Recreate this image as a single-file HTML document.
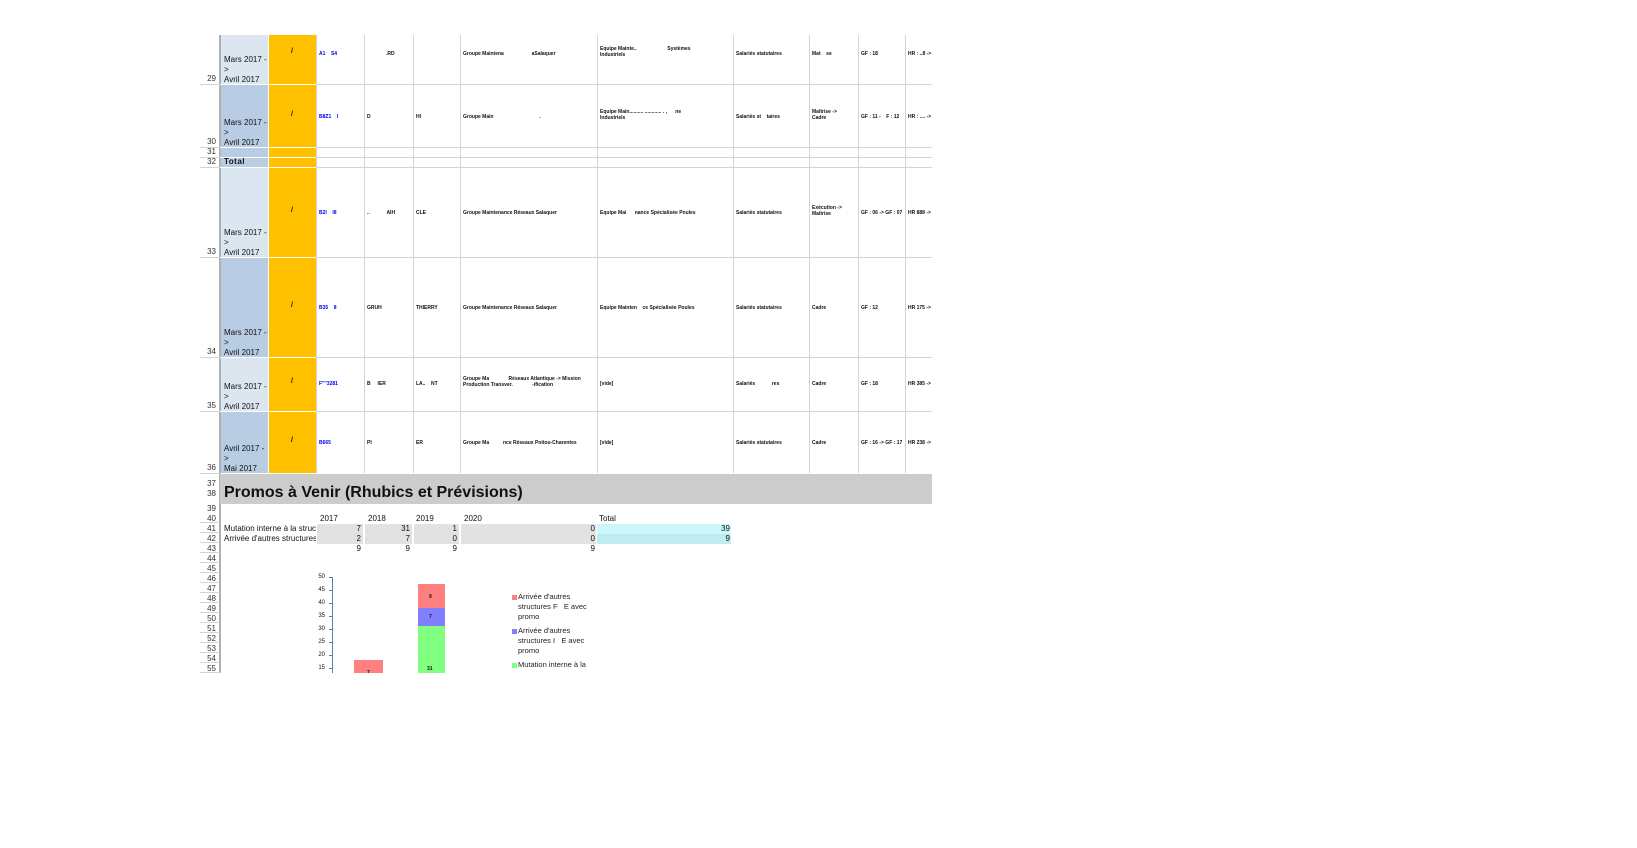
<!DOCTYPE html>
<html><head><meta charset="utf-8"><style>
*{margin:0;padding:0;box-sizing:border-box}
body{width:1637px;height:848px;background:#fff;position:relative;overflow:hidden;font-family:"Liberation Sans",Arial,sans-serif}
.a{position:absolute}
.h{position:absolute;height:1px;background:#d4d4d4}
.v{position:absolute;width:1px;background:#d4d4d4}
.rn{position:absolute;left:196px;width:20px;text-align:right;font-size:8px;color:#333;line-height:10px}
.t{position:absolute;font-size:5px;font-weight:bold;color:#111;white-space:nowrap;line-height:6px}
.b{color:#0000ee}
.dt{position:absolute;left:224px;font-size:8px;line-height:10px;color:#111;white-space:nowrap}
.n{position:absolute;font-size:8px;line-height:10px;color:#111;text-align:right}
.g{position:absolute;background:#e6e6e6;background-image:radial-gradient(#d6d6d6 0.5px,transparent 0.8px);background-size:2px 2px}
.lg{position:absolute;font-size:7px;line-height:10px;color:#222;white-space:nowrap}
</style></head><body>

<div class="a" style="left:220px;top:35px;width:48px;height:49px;background:#dce6f1"></div>
<div class="a" style="left:220px;top:84px;width:48px;height:83px;background:#b8cce4"></div>
<div class="a" style="left:220px;top:167px;width:48px;height:90px;background:#dce6f1"></div>
<div class="a" style="left:220px;top:257px;width:48px;height:100px;background:#b8cce4"></div>
<div class="a" style="left:220px;top:357px;width:48px;height:54px;background:#dce6f1"></div>
<div class="a" style="left:220px;top:411px;width:48px;height:62px;background:#b8cce4"></div>
<div class="a" style="left:268px;top:35px;width:48px;height:438px;background:#ffc000"></div>

<div class="a" style="left:219px;top:35px;width:2px;height:638px;background:#b0b0b0"></div>
<div class="a" style="left:268px;top:35px;width:1px;height:438px;background:#fff"></div>
<div class="v" style="left:316px;top:35px;height:438px"></div>
<div class="v" style="left:364px;top:35px;height:438px"></div>
<div class="v" style="left:413px;top:35px;height:438px"></div>
<div class="v" style="left:460px;top:35px;height:438px"></div>
<div class="v" style="left:597px;top:35px;height:438px"></div>
<div class="v" style="left:733px;top:35px;height:438px"></div>
<div class="v" style="left:809px;top:35px;height:438px"></div>
<div class="v" style="left:858px;top:35px;height:438px"></div>
<div class="v" style="left:905px;top:35px;height:438px"></div>

<div class="h" style="left:200px;top:84px;width:732px"></div>
<div class="h" style="left:200px;top:147px;width:732px"></div>
<div class="h" style="left:200px;top:157px;width:732px"></div>
<div class="h" style="left:200px;top:167px;width:732px"></div>
<div class="h" style="left:200px;top:257px;width:732px"></div>
<div class="h" style="left:200px;top:357px;width:732px"></div>
<div class="h" style="left:200px;top:411px;width:732px"></div>
<div class="h" style="left:200px;top:473px;width:20px"></div>
<div class="a" style="left:220px;top:84px;width:96px;height:1px;background:#fff"></div>
<div class="a" style="left:220px;top:147px;width:96px;height:1px;background:#fff"></div>
<div class="a" style="left:220px;top:157px;width:96px;height:1px;background:#fff"></div>
<div class="a" style="left:220px;top:167px;width:96px;height:1px;background:#fff"></div>
<div class="a" style="left:220px;top:257px;width:96px;height:1px;background:#fff"></div>
<div class="a" style="left:220px;top:357px;width:96px;height:1px;background:#fff"></div>
<div class="a" style="left:220px;top:411px;width:96px;height:1px;background:#fff"></div>

<div class="rn" style="top:74px">29</div>
<div class="rn" style="top:137px">30</div>
<div class="rn" style="top:147px">31</div>
<div class="rn" style="top:157px">32</div>
<div class="rn" style="top:247px">33</div>
<div class="rn" style="top:347px">34</div>
<div class="rn" style="top:401px">35</div>
<div class="rn" style="top:463px">36</div>

<div class="dt" style="top:55px">Mars 2017 -<br>&gt;<br>Avril 2017</div>
<div class="dt" style="top:118px">Mars 2017 -<br>&gt;<br>Avril 2017</div>
<div class="dt" style="top:157px;font-weight:bold;letter-spacing:0.5px">Total</div>
<div class="dt" style="top:228px">Mars 2017 -<br>&gt;<br>Avril 2017</div>
<div class="dt" style="top:328px">Mars 2017 -<br>&gt;<br>Avril 2017</div>
<div class="dt" style="top:382px">Mars 2017 -<br>&gt;<br>Avril 2017</div>
<div class="dt" style="top:444px">Avril 2017 -<br>&gt;<br>Mai 2017</div>

<div class="t" style="left:291px;top:49px;font-size:7px">/</div>
<div class="t" style="left:291px;top:112px;font-size:7px">/</div>
<div class="t" style="left:291px;top:208px;font-size:7px">/</div>
<div class="t" style="left:291px;top:303px;font-size:7px">/</div>
<div class="t" style="left:291px;top:379px;font-size:7px">/</div>
<div class="t" style="left:291px;top:438px;font-size:7px">/</div>

<div class="t b" style="left:319px;top:51px">A1 &nbsp; &nbsp;S4</div>
<div class="t" style="left:386px;top:51px">.RD</div>
<div class="t" style="left:463px;top:51px">Groupe Maintena &nbsp; &nbsp; &nbsp; &nbsp; &nbsp; &nbsp; &nbsp; &nbsp; &nbsp; &nbsp;aSalaquer</div>
<div class="t" style="left:600px;top:46px">Equipe Mainte.. &nbsp; &nbsp; &nbsp; &nbsp; &nbsp; &nbsp; &nbsp; &nbsp; &nbsp; &nbsp; &nbsp;Systèmes<br>Industriels</div>
<div class="t" style="left:736px;top:51px">Salariés statutaires</div>
<div class="t" style="left:812px;top:51px">Mat &nbsp; &nbsp;se</div>
<div class="t" style="left:861px;top:51px">GF : 18</div>
<div class="t" style="left:908px;top:51px">HR : ..8 -&gt;</div>

<div class="t b" style="left:319px;top:114px">B8Z1 &nbsp; &nbsp;I</div>
<div class="t" style="left:367px;top:114px">D</div>
<div class="t" style="left:416px;top:114px">HI</div>
<div class="t" style="left:463px;top:114px">Groupe Main &nbsp; &nbsp; &nbsp; &nbsp; &nbsp; &nbsp; &nbsp; &nbsp; &nbsp; &nbsp; &nbsp; &nbsp; &nbsp; &nbsp; &nbsp; &nbsp; .</div>
<div class="t" style="left:600px;top:109px">Equipe Main.......... ............ . , &nbsp; &nbsp; &nbsp;ne<br>Industriels</div>
<div class="t" style="left:736px;top:114px">Salariés st &nbsp; &nbsp;taires</div>
<div class="t" style="left:812px;top:109px">Maîtrise -&gt;<br>Cadre</div>
<div class="t" style="left:861px;top:114px">GF : 11 - &nbsp; &nbsp;F : 12</div>
<div class="t" style="left:908px;top:114px">HR : .... -&gt;</div>

<div class="t b" style="left:319px;top:210px">B2I &nbsp; &nbsp;I8</div>
<div class="t" style="left:367px;top:210px">.. &nbsp; &nbsp; &nbsp; &nbsp; &nbsp; &nbsp;AIH</div>
<div class="t" style="left:416px;top:210px">CLE</div>
<div class="t" style="left:463px;top:210px">Groupe Maintenance Réseaux Salaquer</div>
<div class="t" style="left:600px;top:210px">Equipe Mai &nbsp; &nbsp; &nbsp;nance Spécialisée Poules</div>
<div class="t" style="left:736px;top:210px">Salariés statutaires</div>
<div class="t" style="left:812px;top:205px">Exécution -&gt;<br>Maîtrise</div>
<div class="t" style="left:861px;top:210px">GF : 06 -&gt; GF : 07</div>
<div class="t" style="left:908px;top:210px">HR 888 -&gt;</div>

<div class="t b" style="left:319px;top:305px">B35 &nbsp; &nbsp;8</div>
<div class="t" style="left:367px;top:305px">GRUH</div>
<div class="t" style="left:416px;top:305px">THIERRY</div>
<div class="t" style="left:463px;top:305px">Groupe Maintenance Réseaux Salaquer</div>
<div class="t" style="left:600px;top:305px">Equipe Mainten &nbsp; &nbsp;ce Spécialisée Poules</div>
<div class="t" style="left:736px;top:305px">Salariés statutaires</div>
<div class="t" style="left:812px;top:305px">Cadre</div>
<div class="t" style="left:861px;top:305px">GF : 12</div>
<div class="t" style="left:908px;top:305px">HR 175 -&gt;</div>

<div class="t b" style="left:319px;top:381px">F""3281</div>
<div class="t" style="left:367px;top:381px">B &nbsp; &nbsp; IER</div>
<div class="t" style="left:416px;top:381px">LA.. &nbsp; &nbsp;NT</div>
<div class="t" style="left:463px;top:376px">Groupe Ma &nbsp; &nbsp; &nbsp; &nbsp; &nbsp; &nbsp; &nbsp;Réseaux Atlantique -&gt; Mission<br>Production Transver. &nbsp; &nbsp; &nbsp; &nbsp; &nbsp; &nbsp; &nbsp;-ification</div>
<div class="t" style="left:600px;top:381px">[vide]</div>
<div class="t" style="left:736px;top:381px">Salariés &nbsp; &nbsp; &nbsp; &nbsp; &nbsp; &nbsp;res</div>
<div class="t" style="left:812px;top:381px">Cadre</div>
<div class="t" style="left:861px;top:381px">GF : 18</div>
<div class="t" style="left:908px;top:381px">HR 385 -&gt;</div>

<div class="t b" style="left:319px;top:440px">B665</div>
<div class="t" style="left:367px;top:440px">PI</div>
<div class="t" style="left:416px;top:440px">ER</div>
<div class="t" style="left:463px;top:440px">Groupe Ma &nbsp; &nbsp; &nbsp; &nbsp; &nbsp;nce Réseaux Poitou-Charentes</div>
<div class="t" style="left:600px;top:440px">[vide]</div>
<div class="t" style="left:736px;top:440px">Salariés statutaires</div>
<div class="t" style="left:812px;top:440px">Cadre</div>
<div class="t" style="left:861px;top:440px">GF : 16 -&gt; GF : 17</div>
<div class="t" style="left:908px;top:440px">HR 238 -&gt;</div>

<!-- clip K column overflow -->
<div class="a" style="left:932px;top:30px;width:100px;height:450px;background:#fff"></div>

<div class="a" style="left:220px;top:474px;width:712px;height:30px;background:#cccccc"></div>
<div class="a" style="left:224px;top:483px;font-size:16px;font-weight:bold;color:#111;white-space:nowrap;line-height:20px">Promos à Venir (Rhubics et Prévisions)</div>

<div class="rn" style="top:479px">37</div>
<div class="rn" style="top:489px">38</div>
<div class="rn" style="top:504px">39</div>
<div class="rn" style="top:514px">40</div>
<div class="rn" style="top:524px">41</div>
<div class="rn" style="top:534px">42</div>
<div class="rn" style="top:544px">43</div>
<div class="rn" style="top:554px">44</div>
<div class="rn" style="top:564px">45</div>
<div class="rn" style="top:574px">46</div>
<div class="rn" style="top:584px">47</div>
<div class="rn" style="top:594px">48</div>
<div class="rn" style="top:604px">49</div>
<div class="rn" style="top:614px">50</div>
<div class="rn" style="top:624px">51</div>
<div class="rn" style="top:634px">52</div>
<div class="rn" style="top:644px">53</div>
<div class="rn" style="top:654px">54</div>
<div class="rn" style="top:664px">55</div>
<div class="a" style="left:200px;top:513px;width:20px;height:165px;background:repeating-linear-gradient(to bottom,transparent 0,transparent 9px,#d4d4d4 9px,#d4d4d4 10px)"></div>

<div class="n" style="left:320px;top:514px">2017</div>
<div class="n" style="left:368px;top:514px">2018</div>
<div class="n" style="left:416px;top:514px">2019</div>
<div class="n" style="left:464px;top:514px">2020</div>
<div class="n" style="left:599px;top:514px">Total</div>
<div class="g" style="left:317px;top:524px;width:46px;height:20px"></div>
<div class="g" style="left:365px;top:524px;width:47px;height:20px"></div>
<div class="g" style="left:414px;top:524px;width:45px;height:20px"></div>
<div class="g" style="left:461px;top:524px;width:135px;height:20px"></div>
<div class="a" style="left:597px;top:524px;width:134px;height:10px;background:#ccf8fc"></div>
<div class="a" style="left:597px;top:534px;width:134px;height:10px;background:#c0ecf0"></div>
<div class="dt" style="top:524px;width:92px;overflow:hidden">Mutation interne à la structure</div>
<div class="dt" style="top:534px;width:92px;overflow:hidden">Arrivée d'autres structures</div>
<div class="n" style="left:316px;top:524px;width:45px">7</div>
<div class="n" style="left:364px;top:524px;width:46px">31</div>
<div class="n" style="left:413px;top:524px;width:44px">1</div>
<div class="n" style="left:460px;top:524px;width:135px">0</div>
<div class="n" style="left:597px;top:524px;width:133px">39</div>
<div class="n" style="left:316px;top:534px;width:45px">2</div>
<div class="n" style="left:364px;top:534px;width:46px">7</div>
<div class="n" style="left:413px;top:534px;width:44px">0</div>
<div class="n" style="left:460px;top:534px;width:135px">0</div>
<div class="n" style="left:597px;top:534px;width:133px">9</div>
<div class="n" style="left:316px;top:544px;width:45px">9</div>
<div class="n" style="left:364px;top:544px;width:46px">9</div>
<div class="n" style="left:413px;top:544px;width:44px">9</div>
<div class="n" style="left:460px;top:544px;width:135px">9</div>

<div class="a" style="left:332px;top:577px;width:1px;height:101px;background:#6080a0"></div>
<div class="n" style="left:306px;top:572px;width:19px;font-size:6px">50</div>
<div class="n" style="left:306px;top:585px;width:19px;font-size:6px">45</div>
<div class="n" style="left:306px;top:598px;width:19px;font-size:6px">40</div>
<div class="n" style="left:306px;top:611px;width:19px;font-size:6px">35</div>
<div class="n" style="left:306px;top:624px;width:19px;font-size:6px">30</div>
<div class="n" style="left:306px;top:637px;width:19px;font-size:6px">25</div>
<div class="n" style="left:306px;top:650px;width:19px;font-size:6px">20</div>
<div class="n" style="left:306px;top:663px;width:19px;font-size:6px">15</div>
<div class="a" style="left:329px;top:577px;width:4px;height:101px;background:repeating-linear-gradient(to bottom,#6080a0 0,#6080a0 1px,transparent 1px,transparent 13px)"></div>
<div class="a" style="left:354px;top:660px;width:29px;height:18px;background:#ff8080"></div>
<div class="a" style="left:418px;top:584px;width:27px;height:24px;background:#ff8080"></div>
<div class="a" style="left:418px;top:608px;width:27px;height:18px;background:#8080ff"></div>
<div class="a" style="left:418px;top:626px;width:27px;height:52px;background:#80ff80"></div>
<div class="t" style="left:429px;top:594px">9</div>
<div class="t" style="left:429px;top:614px">7</div>
<div class="t" style="left:427px;top:666px">31</div>
<div class="t" style="left:367px;top:670px">7</div>
<div class="a" style="left:512px;top:595px;width:5px;height:5px;background:#ff8080"></div>
<div class="lg" style="left:518px;top:592px;font-size:7.5px">Arrivée d'autres<br>structures F &nbsp; E avec<br>promo</div>
<div class="a" style="left:512px;top:629px;width:5px;height:5px;background:#8080ff"></div>
<div class="lg" style="left:518px;top:626px;font-size:7.5px">Arrivée d'autres<br>structures I &nbsp; E avec<br>promo</div>
<div class="a" style="left:512px;top:663px;width:5px;height:5px;background:#80ff80"></div>
<div class="lg" style="left:518px;top:660px;font-size:7.5px">Mutation interne à la</div>

<div class="a" style="left:0;top:673px;width:1637px;height:175px;background:#fff"></div>
</body></html>
